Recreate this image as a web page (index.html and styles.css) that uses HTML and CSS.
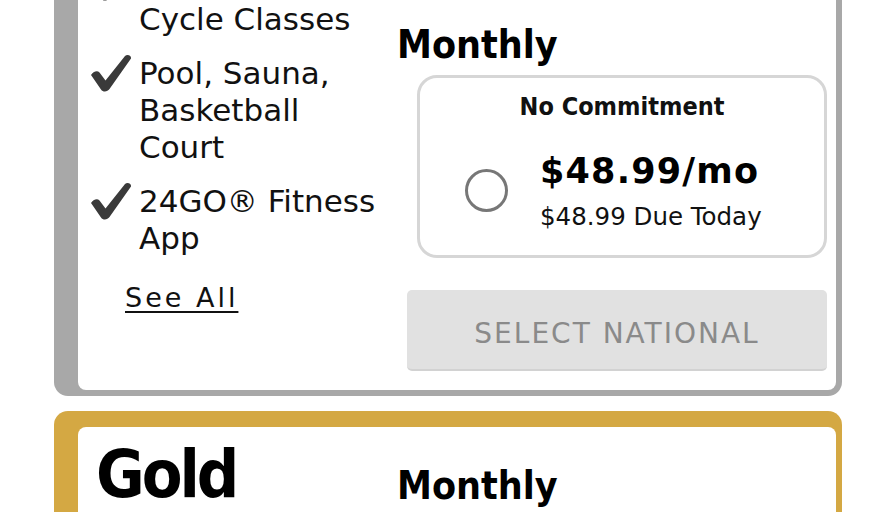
FILE: index.html
```html
<!DOCTYPE html>
<html lang="en">
<head>
    <meta charset="UTF-8">
    <meta name="viewport" content="width=device-width, initial-scale=1.0">
    <title>Membership Plans</title>
    <link rel="stylesheet" href="styles.css">
</head>
<body>
    <div class="page">
        <section class="plan plan-national">
            <div class="plan-body">
                <div class="plan-info">
                    <ul class="perks">
                        <li>
                            <svg class="check" viewBox="0 0 42 38"><path d="M1 21 C3 18 7 16 9.5 18.5 L15.5 26.5 L35 2 C37 0 41.5 1 41 4.5 L19.5 35 C17.5 38 13 38.5 11 35.5 Z"/></svg>
                            <span>Group Fitness, Cycle Classes</span>
                        </li>
                        <li>
                            <svg class="check" viewBox="0 0 42 38"><path d="M1 21 C3 18 7 16 9.5 18.5 L15.5 26.5 L35 2 C37 0 41.5 1 41 4.5 L19.5 35 C17.5 38 13 38.5 11 35.5 Z"/></svg>
                            <span>Pool, Sauna, Basketball Court</span>
                        </li>
                        <li>
                            <svg class="check" viewBox="0 0 42 38"><path d="M1 21 C3 18 7 16 9.5 18.5 L15.5 26.5 L35 2 C37 0 41.5 1 41 4.5 L19.5 35 C17.5 38 13 38.5 11 35.5 Z"/></svg>
                            <span>24GO&reg; Fitness App</span>
                        </li>
                    </ul>
                    <a class="see-all" href="#">See All</a>
                </div>
                <div class="plan-pricing">
                    <h3 class="term">Monthly</h3>
                    <div class="option">
                        <div class="option-title">No Commitment</div>
                        <div class="option-row">
                            <span class="radio"></span>
                            <div>
                                <div class="price">$48.99/mo</div>
                                <div class="due">$48.99 Due Today</div>
                            </div>
                        </div>
                    </div>
                    <button class="select-btn" disabled>SELECT NATIONAL</button>
                </div>
            </div>
        </section>

        <section class="plan plan-gold">
            <div class="plan-body">
                <div class="plan-info">
                    <h2 class="plan-name">Gold</h2>
                </div>
                <div class="plan-pricing">
                    <h3 class="term">Monthly</h3>
                </div>
            </div>
        </section>
    </div>
</body>
</html>
```

FILE: styles.css
```css
body {
    margin: 0;
    background-color: #ffffff;
    color: #111111;
    font-family: "DejaVu Sans", sans-serif;
}
.page {
    padding: 0 54px;
}
.plan {
    padding: 16px 6px 6px 24px;
    border-radius: 14px;
    margin-bottom: 15px;
}
.plan-national {
    background-color: #a8a8a8;
    margin-top: -64px;
}
.plan-gold {
    background-color: #d4a843;
}
.plan-body {
    display: grid;
    grid-template-columns: 319px 1fr;
    align-items: start;
    background-color: #ffffff;
    border-radius: 8px;
    padding: 12px 9px 19px 0;
}
.plan-gold .plan-body {
    min-height: 200px;
}
.plan-info {
    padding-left: 12px;
}
.perks {
    list-style: none;
    margin: 0;
    padding: 0;
}
.perks li {
    display: flex;
    gap: 7px;
    font-size: 31px;
    line-height: 37px;
    margin-bottom: 17px;
}
.perks li > span {
    max-width: 240px;
}
.check {
    flex: none;
    width: 42px;
    height: 38px;
    margin-top: -1px;
    fill: #3a3a3a;
}
.see-all {
    display: inline-block;
    margin: 7px 0 0 35px;
    font-size: 27px;
    line-height: 34px;
    letter-spacing: 3px;
    color: #111111;
    text-decoration: underline;
    text-decoration-thickness: 2px;
    text-underline-offset: 4px;
}
.plan-name {
    margin: 3px 0 0 6px;
    font-family: "DejaVu Sans Condensed", "DejaVu Sans", sans-serif;
    font-stretch: condensed;
    font-size: 66px;
    line-height: 66px;
    letter-spacing: -3px;
    color: #000000;
}
.plan-pricing {
    padding-top: 23px;
}
.plan-national .plan-pricing {
    padding-top: 57px;
}
.term {
    margin: 0 0 7px;
    font-family: "DejaVu Sans Condensed", "DejaVu Sans", sans-serif;
    font-stretch: condensed;
    font-size: 39px;
    line-height: 47px;
    color: #000000;
}
.option {
    margin-left: 20px;
    border: 3px solid #d6d6d6;
    border-radius: 20px;
    padding: 14px 0 0 45px;
    height: 163px;
}
.option-title {
    margin-left: -45px;
    text-align: center;
    font-family: "DejaVu Sans Condensed", "DejaVu Sans", sans-serif;
    font-stretch: condensed;
    font-weight: bold;
    font-size: 25px;
    line-height: 30px;
}
.option-row {
    display: flex;
    align-items: center;
    gap: 32px;
    margin-top: 28px;
}
.radio {
    flex: none;
    width: 37px;
    height: 37px;
    border: 3px solid #777777;
    border-radius: 50%;
}
.price {
    font-weight: bold;
    font-size: 35px;
    line-height: 42px;
    letter-spacing: 1.2px;
    color: #000000;
}
.due {
    margin-top: 11px;
    font-size: 24.5px;
    line-height: 28px;
}
.select-btn {
    display: block;
    width: calc(100% - 10px);
    height: 81px;
    margin: 32px 0 0 10px;
    padding-top: 9px;
    border: none;
    border-bottom: 2px solid #d2d2d2;
    border-radius: 5px;
    background-color: #e1e1e1;
    color: #8a8a8a;
    font-family: "DejaVu Sans", sans-serif;
    font-size: 28px;
    letter-spacing: 2px;
}
```
